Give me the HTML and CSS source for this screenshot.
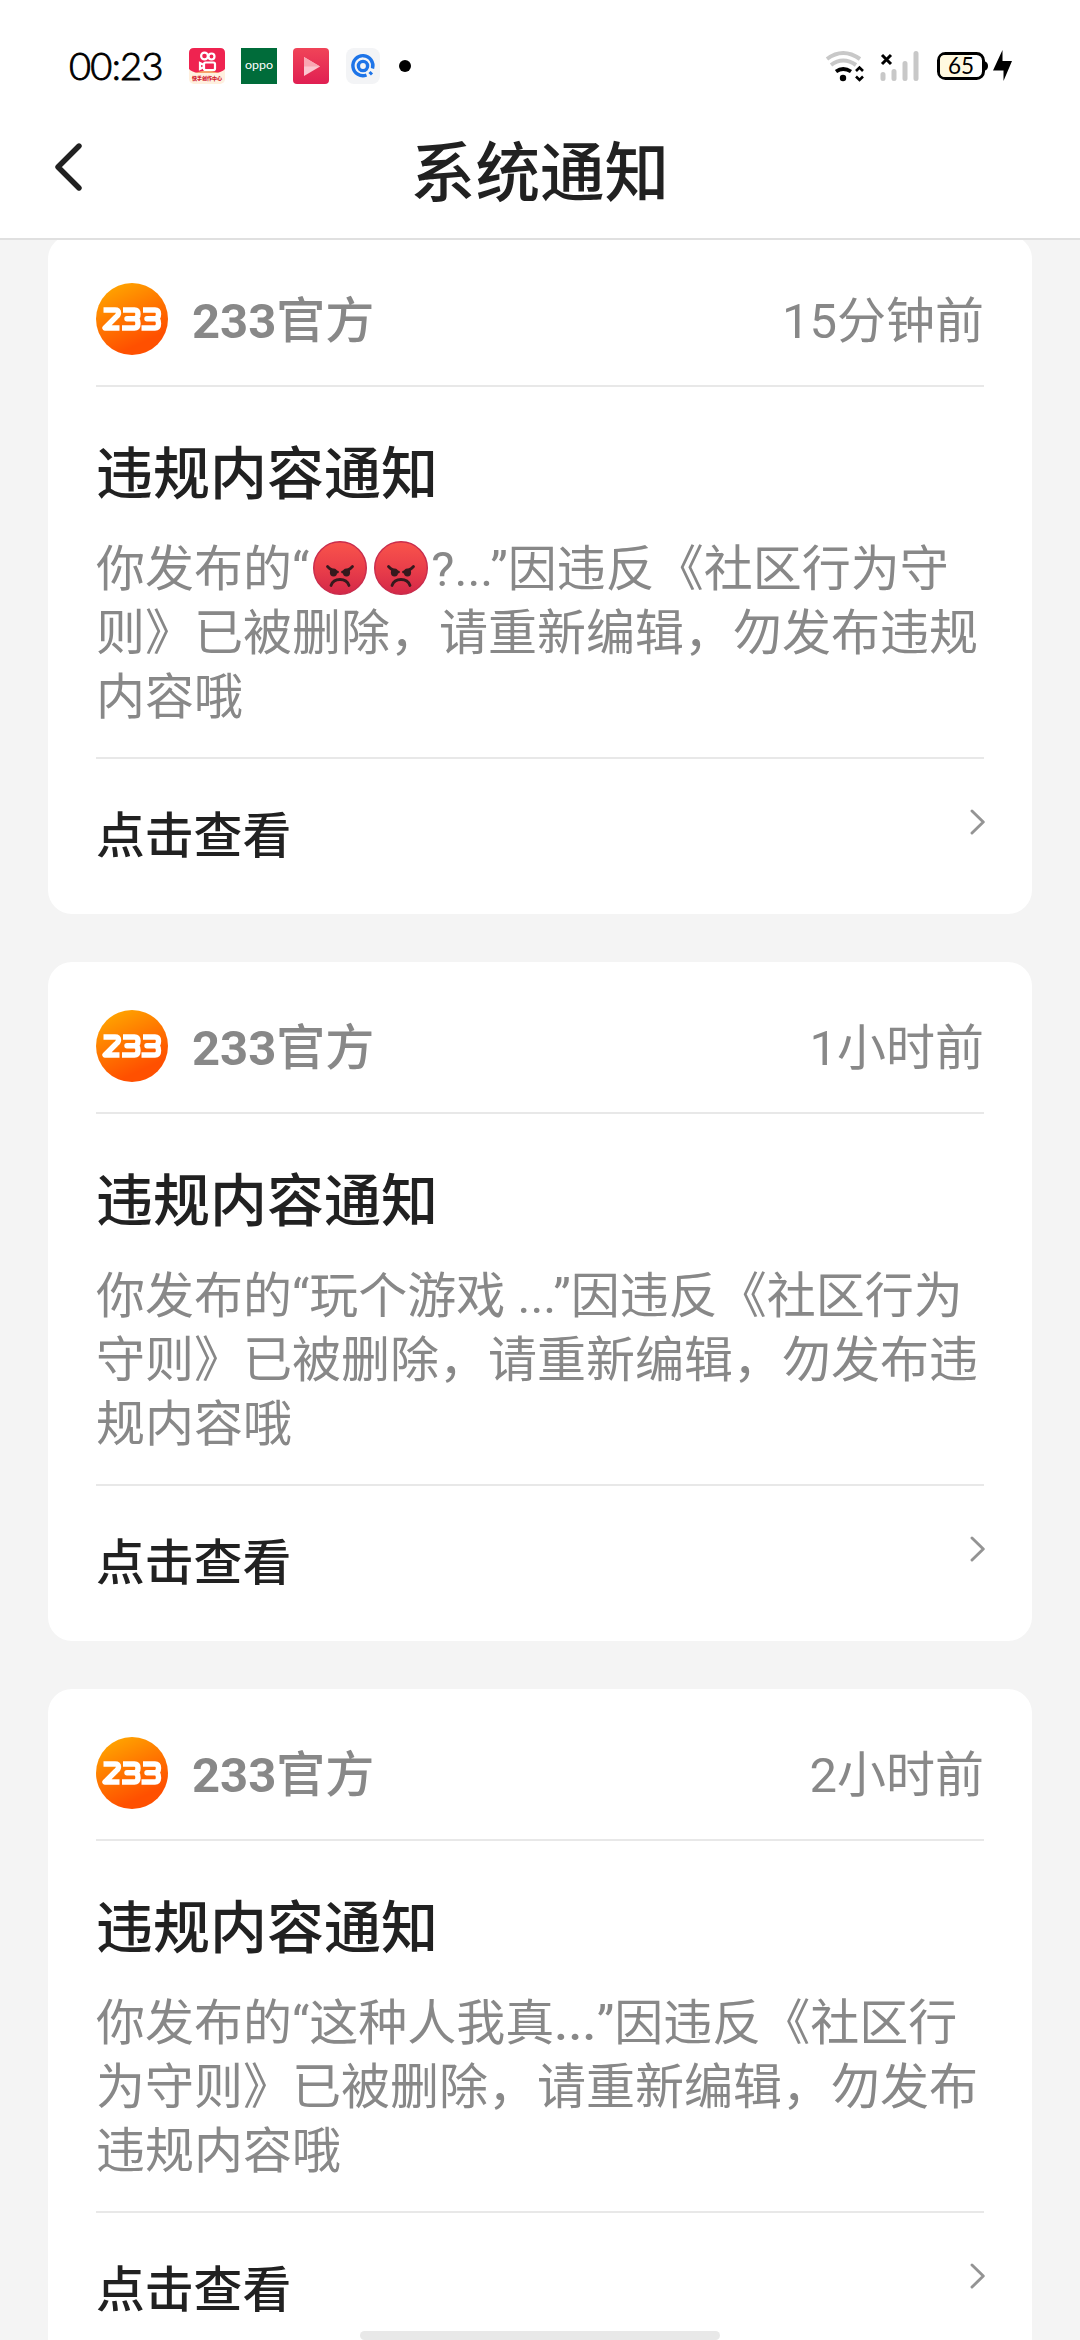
FILE: index.html
```html
<!DOCTYPE html>
<html lang="zh-CN">
<head>
<meta charset="utf-8">
<title>系统通知</title>
<link rel="stylesheet" href="styles.css">
</head>
<body>
<svg class="defs" width="0" height="0" aria-hidden="true">
  <defs>
    <linearGradient id="orange" x1="0.2" y1="0" x2="0.6" y2="0.85"><stop offset="0" stop-color="#ffa800"/><stop offset="0.5" stop-color="#ff7a00"/><stop offset="1" stop-color="#ff5000"/></linearGradient>
    <linearGradient id="angry" x1="0" y1="0" x2="0" y2="1"><stop offset="0" stop-color="#f9544b"/><stop offset="0.5" stop-color="#ea3f4a"/><stop offset="1" stop-color="#d42848"/></linearGradient>
    <linearGradient id="play" x1="0" y1="0" x2="0" y2="1"><stop offset="0" stop-color="#f04458"/><stop offset="1" stop-color="#e01f52"/></linearGradient>
    <symbol id="logo" viewBox="0 0 72 72">
      <circle cx="36" cy="36" r="36" fill="url(#orange)"/>
      <g fill="none" stroke="#fff" stroke-width="5.4" stroke-linejoin="round">
        <path d="M7.500 27H19Q22.500 27 22.500 30Q22.500 32 20 34L9 45H23.500"/>
        <path d="M27 27H38.500Q42 27 42 31Q42 35.800 38.500 35.800H31H38.500Q42 35.800 42 40.500Q42 45 38.500 45H26"/>
        <path d="M47 27H59Q62.500 27 62.500 31Q62.500 35.800 59 35.800H51H59Q62.500 35.800 62.500 40.500Q62.500 45 59 45H45.500"/>
      </g>
    </symbol>
    <symbol id="face" viewBox="0 0 54 54">
      <circle cx="27" cy="27" r="26.300" fill="url(#angry)" stroke="#c92c4c" stroke-width="1.400"/>
      <path d="M14.500 25.500Q18 29.500 24.500 31M39.500 25.500Q36 29.500 29.500 31M18 44.500Q20 38.500 27 38.500Q34 38.500 36 44.500" fill="none" stroke="#35191d" stroke-width="2.800" stroke-linecap="round"/>
      <ellipse cx="20.500" cy="31.500" rx="3.600" ry="4.100" fill="#35191d"/><ellipse cx="33.500" cy="31.500" rx="3.600" ry="4.100" fill="#35191d"/>
    </symbol>
    <symbol id="chevron" viewBox="0 0 16 28"><path d="M3 3L14.300 14L3 25" fill="none" stroke="#949494" stroke-width="2.900" stroke-linecap="round" stroke-linejoin="round"/></symbol>
  </defs>
</svg>

<div class="statusbar">
  <span class="clock">00:23</span>
  <div class="apps">
    <svg width="36" height="36" viewBox="0 0 36 36">
      <rect width="36" height="36" rx="5" fill="#fff0df"/>
      <path d="M5 0H31Q36 0 36 5V21Q33 24 27 25H9Q3 24 0 21V5Q0 0 5 0Z" fill="#ef2350"/>
      <path d="M6 25Q18 20 30 25Z" fill="#f6a46b"/>
      <g fill="none" stroke="#fff" stroke-width="2.200"><circle cx="15.500" cy="8" r="3.400"/><circle cx="22.500" cy="8.500" r="3"/><rect x="15" y="14.500" width="11" height="7.500" rx="1.500"/><path d="M15 17L11 15V21L15 19"/></g>
      <text x="18" y="32" class="app-caption">快手创作中心</text>
    </svg>
    <svg width="36" height="36" viewBox="0 0 36 36">
      <rect width="36" height="36" fill="#006c3a"/>
      <text x="4" y="20.500" class="oppo" textLength="28" lengthAdjust="spacingAndGlyphs">oppo</text>
    </svg>
    <svg width="36" height="36" viewBox="0 0 36 36"><rect width="36" height="36" rx="4" fill="url(#play)"/><path d="M11 9V28L27 18.500Z" fill="#fbc6cf"/><path d="M11 9L27 18.500H11Z" fill="#f9a6b2"/></svg>
    <svg width="36" height="36" viewBox="0 0 36 36"><rect x="1" width="34" height="36" rx="8" fill="#f3f4f6"/><path d="M27.500 20.500A10 10 0 1 0 21.500 27" fill="none" stroke="#1d74e8" stroke-width="3.400"/><circle cx="18" cy="18" r="4.600" fill="none" stroke="#1d74e8" stroke-width="3.400"/><path d="M24.500 24L27 26.500" stroke="#1d74e8" stroke-width="3"/></svg>
  </div>
  <span class="more-dot"></span>
  <div class="system">
    <svg class="wifi" width="40" height="32" viewBox="0 0 40 32" fill="none">
      <path d="M2 9Q18 -3 35 9" stroke="#c8c8c8" stroke-width="4"/><path d="M6 15Q18 6 31 15" stroke="#c8c8c8" stroke-width="4"/>
      <path d="M11 21.500Q18 16.500 26 21.500" stroke="#000" stroke-width="3.800"/><circle cx="18" cy="28" r="3.200" fill="#000"/>
      <path d="M31 21L34.500 17.500L38 21M31 26.500L34.500 30L38 26.500" stroke="#000" stroke-width="2.600"/>
    </svg>
    <svg class="signal" width="40" height="32" viewBox="0 0 40 32">
      <path d="M3 24.500V28.500M14 21.500V28.500M25 13.500V28.500M36 3.500V28.500" stroke="#c8c8c8" stroke-width="5" stroke-linecap="round"/>
      <path d="M2 5L11 14M11 5L2 14" stroke="#000" stroke-width="3"/>
    </svg>
    <svg class="battery" width="52" height="32" viewBox="0 0 52 32">
      <rect x="1.500" y="3.500" width="45" height="25" rx="7" fill="#fff" stroke="#000" stroke-width="3"/>
      <path d="M8 5H32V27H8Q3 27 3 22V10Q3 5 8 5Z" fill="#fff9e0"/>
      <path d="M47 11Q51 12 51 16Q51 20 47 21Z"/>
      <text x="24" y="23.800" class="percent">65</text>
    </svg>
    <svg class="bolt" width="20" height="32" viewBox="0 0 20 32"><path d="M9.500 0V11H19L10.500 31V20.500H0Z"/></svg>
  </div>
</div>

<header class="navbar">
  <svg class="back" width="28" height="50" viewBox="0 0 28 50"><path d="M25 4L4 25L25 46" fill="none" stroke="#212121" stroke-width="5.400" stroke-linecap="round" stroke-linejoin="round"/></svg>
  <h1 class="page-title">系统通知</h1>
</header>

<main class="feed">
  <article class="card">
    <div class="card-head"><svg class="avatar"><use href="#logo"/></svg><span class="sender"><b>233</b>官方</span><time class="when">15分钟前</time></div>
    <div class="card-body">
      <h2 class="subject">违规内容通知</h2>
      <p class="message">你发布的“<svg class="emoji"><use href="#face"/></svg><svg class="emoji"><use href="#face"/></svg>?<span class="dots">...</span>”因违反《社区行为守<br>则》已被删除，请重新编辑，勿发布违规<br>内容哦</p>
    </div>
    <div class="card-foot"><span class="action">点击查看</span><svg class="chevron"><use href="#chevron"/></svg></div>
  </article>
  <article class="card">
    <div class="card-head"><svg class="avatar"><use href="#logo"/></svg><span class="sender"><b>233</b>官方</span><time class="when">1小时前</time></div>
    <div class="card-body">
      <h2 class="subject">违规内容通知</h2>
      <p class="message">你发布的“玩个游戏 <span class="dots">...</span>”因违反《社区行为<br>守则》已被删除，请重新编辑，勿发布违<br>规内容哦</p>
    </div>
    <div class="card-foot"><span class="action">点击查看</span><svg class="chevron"><use href="#chevron"/></svg></div>
  </article>
  <article class="card">
    <div class="card-head"><svg class="avatar"><use href="#logo"/></svg><span class="sender"><b>233</b>官方</span><time class="when">2小时前</time></div>
    <div class="card-body">
      <h2 class="subject">违规内容通知</h2>
      <p class="message">你发布的“这种人我真<span class="heavy">...</span>”因违反《社区行<br>为守则》已被删除，请重新编辑，勿发布<br>违规内容哦</p>
    </div>
    <div class="card-foot"><span class="action">点击查看</span><svg class="chevron"><use href="#chevron"/></svg></div>
  </article>
</main>
<div class="home-indicator"></div>
</body>
</html>
```

FILE: styles.css
```css
* { box-sizing: border-box; }
html, body { margin: 0; height: 2340px; overflow: hidden; }
body {
  position: relative;
  width: 1080px;
  display: flex;
  flex-direction: column;
  background: #f4f4f4;
  color: #212121;
  font-family: Roboto, "Noto Sans CJK SC", sans-serif;
}
svg { display: block; flex: none; }
.defs { position: absolute; }

/* status bar */
.statusbar {
  flex: none;
  display: flex;
  align-items: center;
  height: 132px;
  padding: 0 67px 0 69px;
  background: #fff;
}
.clock { width: 120px; margin-top: -3px; font: 300 38px/40px Lato, sans-serif; color: #000; letter-spacing: -0.700px; white-space: nowrap; -webkit-text-stroke: 0.900px #000; }
.apps { display: flex; gap: 16px; }
.app-caption { font: 900 5px "Noto Sans CJK SC", sans-serif; fill: #d2202f; text-anchor: middle; }
.oppo { font: 400 11px Lato, sans-serif; fill: #fff; }
.more-dot { width: 12px; height: 12px; margin-left: 18px; border-radius: 50%; background: #000; }
.system { display: flex; margin-left: auto; }
.signal { margin-left: 15px; }
.battery { margin-left: 17px; }
.bolt { margin-left: 4px; }
.percent { font: 400 22.500px Lato, sans-serif; text-anchor: middle; }

/* title bar */
.navbar {
  flex: none;
  display: grid;
  grid-template-columns: 90px 1fr 90px;
  height: 108px;
  padding: 0;
  background: #fff;
  border-bottom: 2px solid #e0e0e0;
}
.back { margin: 10px 0 0 54px; }
.page-title { margin: 2px 0 0; font-size: 64.600px; line-height: 80px; font-weight: 500; text-align: center; }

/* notification list */
.feed {
  flex: 1;
  min-height: 0;
  overflow: hidden;
  display: flex;
  flex-direction: column;
  gap: 48px;
  padding: 0 48px;
}
.card { flex: none; height: 678.900px; padding: 0 48px; background: #fff; border-radius: 24px; }
.card:first-child { margin-top: -4.900px; }
.card-head { display: flex; height: 152px; padding-top: 48px; border-bottom: 2px solid #e8e8e8; font-size: 49px; line-height: 78px; color: #888; }
.avatar { width: 72px; height: 72px; margin-right: 24px; }
.sender { font-weight: 500; }
.sender b { font-weight: 700; }
.when { margin-left: auto; }
.card-body { height: 371.900px; padding-top: 50px; border-bottom: 2px solid #e8e8e8; }
.subject { margin: 0; font-size: 57px; line-height: 76px; font-weight: 500; }
.message { margin: 25px 0 0; font-size: 49px; line-height: 64px; color: #888; white-space: nowrap; }
.emoji { display: inline-block; width: 54px; height: 54px; margin: 0 3.500px; vertical-align: -9px; }
.dots { margin-right: -3px; }
.heavy { font-weight: 500; letter-spacing: 0.500px; }
.card-foot { display: flex; justify-content: space-between; }
.action { padding-top: 40px; font-size: 48.800px; line-height: 76px; font-weight: 500; }
.chevron { width: 16px; height: 28px; margin: 49px -1px 0 0; }

/* gesture handle */
.home-indicator { position: absolute; left: 360px; bottom: 0; width: 360px; height: 9px; border-radius: 5px; background: #e8e8e8; }
```
